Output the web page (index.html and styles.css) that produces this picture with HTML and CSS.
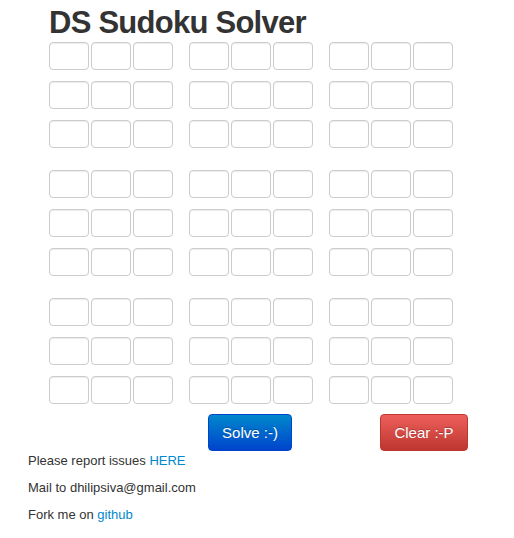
FILE: index.html
```html
<!DOCTYPE html>
<html>
<head>
<meta charset="utf-8">
<link rel="stylesheet" href="styles.css">
</head>
<body>
<div class="page">
  <div class="main">
    <h1 class="title">DS Sudoku Solver</h1>
    <div class="board">
      <div class="block">
        <div class="row"><div class="group"><input class="cell"><input class="cell"><input class="cell"></div><div class="group"><input class="cell"><input class="cell"><input class="cell"></div><div class="group"><input class="cell"><input class="cell"><input class="cell"></div></div>
        <div class="row"><div class="group"><input class="cell"><input class="cell"><input class="cell"></div><div class="group"><input class="cell"><input class="cell"><input class="cell"></div><div class="group"><input class="cell"><input class="cell"><input class="cell"></div></div>
        <div class="row"><div class="group"><input class="cell"><input class="cell"><input class="cell"></div><div class="group"><input class="cell"><input class="cell"><input class="cell"></div><div class="group"><input class="cell"><input class="cell"><input class="cell"></div></div>
      </div>
      <div class="block">
        <div class="row"><div class="group"><input class="cell"><input class="cell"><input class="cell"></div><div class="group"><input class="cell"><input class="cell"><input class="cell"></div><div class="group"><input class="cell"><input class="cell"><input class="cell"></div></div>
        <div class="row"><div class="group"><input class="cell"><input class="cell"><input class="cell"></div><div class="group"><input class="cell"><input class="cell"><input class="cell"></div><div class="group"><input class="cell"><input class="cell"><input class="cell"></div></div>
        <div class="row"><div class="group"><input class="cell"><input class="cell"><input class="cell"></div><div class="group"><input class="cell"><input class="cell"><input class="cell"></div><div class="group"><input class="cell"><input class="cell"><input class="cell"></div></div>
      </div>
      <div class="block">
        <div class="row"><div class="group"><input class="cell"><input class="cell"><input class="cell"></div><div class="group"><input class="cell"><input class="cell"><input class="cell"></div><div class="group"><input class="cell"><input class="cell"><input class="cell"></div></div>
        <div class="row"><div class="group"><input class="cell"><input class="cell"><input class="cell"></div><div class="group"><input class="cell"><input class="cell"><input class="cell"></div><div class="group"><input class="cell"><input class="cell"><input class="cell"></div></div>
        <div class="row"><div class="group"><input class="cell"><input class="cell"><input class="cell"></div><div class="group"><input class="cell"><input class="cell"><input class="cell"></div><div class="group"><input class="cell"><input class="cell"><input class="cell"></div></div>
      </div>
    </div>
    <div class="actions">
      <button class="btn btn-solve">Solve :-)</button>
      <button class="btn btn-clear">Clear :-P</button>
    </div>
  </div>
  <div class="footer">
    <p>Please report issues <a href="#">HERE</a></p>
    <p>Mail to dhilipsiva@gmail.com</p>
    <p>Fork me on <a href="#">github</a></p>
  </div>
</div>
</body>
</html>
```

FILE: styles.css
```css
html, body {
  margin: 0;
  padding: 0;
  background: #ffffff;
}
body {
  font-family: "Liberation Sans", Arial, sans-serif;
  color: #333333;
}
.page {
  padding-left: 28px;
}
.main {
  margin-left: 21px;
}
.title {
  margin: 0;
  padding-top: 6px;
  font-size: 31px;
  line-height: 34px;
  letter-spacing: -0.75px;
  font-weight: bold;
  color: #333333;
  height: 36px;
}
.board {
  display: flex;
  flex-direction: column;
  gap: 22px;
}
.block {
  display: flex;
  flex-direction: column;
  gap: 11px;
}
.row {
  display: flex;
  gap: 16px;
}
.group {
  display: flex;
  gap: 2px;
}
.cell {
  box-sizing: border-box;
  width: 40px;
  height: 28px;
  margin: 0;
  padding: 0;
  border: 1px solid #cccccc;
  border-radius: 4px;
  background: #ffffff;
  box-shadow: inset 0 1px 1px rgba(0,0,0,0.075);
}
.actions {
  display: flex;
  margin-top: 10px;
}
.btn {
  box-sizing: border-box;
  height: 37px;
  border-radius: 4px;
  font-family: "Liberation Sans", Arial, sans-serif;
  font-size: 15px;
  color: #ffffff;
  padding: 0;
  cursor: pointer;
  text-shadow: 0 -1px 0 rgba(0,0,0,0.25);
}
.btn-solve {
  width: 84px;
  margin-left: 159px;
  border: 1px solid #0044cc;
  background: linear-gradient(to bottom, #0088cc, #0044cc);
}
.btn-clear {
  width: 88px;
  margin-left: 88px;
  border: 1px solid #bd362f;
  background: linear-gradient(to bottom, #ee5f5b, #bd362f);
}
.footer {
  font-size: 13px;
  line-height: 17px;
  padding-top: 1px;
}
.footer p {
  margin: 0 0 10px 0;
}
.footer a {
  color: #0088cc;
  text-decoration: none;
}
```
